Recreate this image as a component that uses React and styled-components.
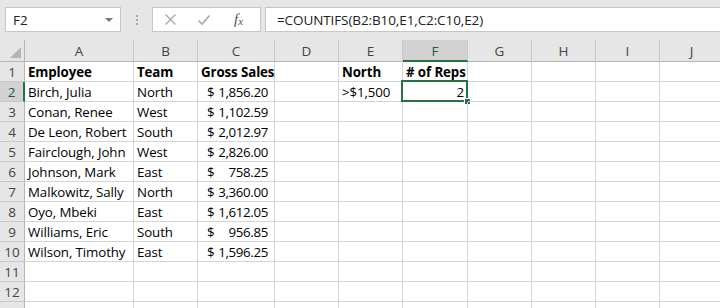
import React from "react";
import styled, { createGlobalStyle } from "styled-components";

const Global = createGlobalStyle`
  html, body { margin: 0; padding: 0; background: #ffffff; overflow: hidden; }
  body { font-family: "Open Sans", "Noto Sans", sans-serif; }
`;

const CELL_FONT = `"Open Sans", "Noto Sans", "Liberation Sans", sans-serif`;

const Page = styled.div`
  width: 720px;
  height: 308px;
  overflow: hidden;
  display: flex;
  flex-direction: column;
`;

const TopBar = styled.div`
  height: 40px;
  flex: none;
  background: #e6e6e6;
  display: flex;
  align-items: flex-start;
  padding: 7px 0 0 5px;
  box-sizing: border-box;
`;

const NameBox = styled.div`
  width: 116px;
  height: 25px;
  box-sizing: border-box;
  background: #fff;
  border: 1px solid #c6c6c6;
  display: flex;
  align-items: center;
  justify-content: space-between;
  padding: 0 7px 0 7px;
  font-family: ${CELL_FONT};
  font-size: 13.5px;
  color: #222;
`;

const Caret = styled.span`
  width: 0;
  height: 0;
  border-left: 4px solid transparent;
  border-right: 4px solid transparent;
  border-top: 4px solid #7a7a7a;
`;

const Grip = styled.div`
  width: 31px;
  height: 25px;
  display: flex;
  flex-direction: column;
  align-items: center;
  justify-content: center;
  gap: 2px;
  & > span {
    width: 2px;
    height: 2px;
    background: #a9a9a9;
  }
`;

const ButtonBox = styled.div`
  width: 109px;
  height: 25px;
  box-sizing: border-box;
  background: #fff;
  border: 1px solid #c6c6c6;
  display: flex;
  align-items: center;
  padding-left: 11px;
  gap: 20px;
`;

const Fx = styled.span`
  font-family: "Liberation Serif", "DejaVu Serif", serif;
  font-style: italic;
  font-size: 15px;
  color: #555;
  margin-left: 3px;
  & > sub {
    font-size: 11px;
    vertical-align: baseline;
    position: relative;
    top: 1px;
  }
`;

const FormulaBox = styled.div`
  flex: 1;
  height: 25px;
  margin-left: 4px;
  box-sizing: border-box;
  background: #fff;
  border: 1px solid #c6c6c6;
  border-right: none;
  display: flex;
  align-items: center;
  padding-left: 11px;
  font-family: ${CELL_FONT};
  font-size: 13.5px;
  letter-spacing: -0.1px;
  color: #222;
  white-space: nowrap;
`;

const COLS = [25, 109, 64, 77, 64, 64, 65, 64, 64, 64, 64, 100];

const Grid = styled.div`
  display: grid;
  grid-template-columns: ${COLS.map((c) => c + "px").join(" ")};
  grid-template-rows: 22px repeat(13, 20px);
  font-family: ${CELL_FONT};
  font-size: 13.3px;
  letter-spacing: -0.1px;
  color: #000;
`;

const ColHead = styled.div`
  box-sizing: border-box;
  background: ${(p) => (p.$active ? "#d2d2d2" : "#e6e6e6")};
  border-right: 1px solid #c8c8c8;
  border-bottom: ${(p) => (p.$active ? "2px solid #217346" : "1px solid #b6b6b6")};
  display: flex;
  align-items: center;
  justify-content: center;
  color: ${(p) => (p.$active ? "#1d5d38" : "#444")};
  font-size: 13.5px;
  letter-spacing: 0;
  padding-top: ${(p) => (p.$active ? "1px" : "0")};
`;

const Corner = styled.div`
  box-sizing: border-box;
  background: #e6e6e6;
  border-right: 1px solid #b6b6b6;
  border-bottom: 1px solid #b6b6b6;
  display: flex;
  align-items: flex-end;
  justify-content: flex-end;
  padding: 0 3px 3px 0;
`;

const RowHead = styled.div`
  box-sizing: border-box;
  background: ${(p) => (p.$active ? "#d2d2d2" : "#e6e6e6")};
  border-right: ${(p) => (p.$active ? "2px solid #217346" : "1px solid #b6b6b6")};
  border-bottom: 1px solid #c8c8c8;
  display: flex;
  align-items: center;
  justify-content: center;
  color: ${(p) => (p.$active ? "#1d5d38" : "#444")};
  font-size: 13.5px;
  letter-spacing: 0;
`;

const Cell = styled.div`
  position: relative;
  box-sizing: border-box;
  border-right: 1px solid #d4d4d4;
  border-bottom: 1px solid #d4d4d4;
  display: flex;
  align-items: center;
  justify-content: ${(p) => (p.$right ? "flex-end" : "flex-start")};
  padding: 0 ${(p) => (p.$right ? "3px" : "0")} 0 3px;
  font-weight: ${(p) => (p.$bold ? 700 : 400)};
  white-space: nowrap;
  overflow: visible;
`;

const Money = styled(Cell)`
  justify-content: space-between;
  padding: 0 6px 0 9px;
  letter-spacing: -0.35px;
`;

const Selection = styled.span`
  position: absolute;
  left: -2px;
  top: -2px;
  right: -1px;
  bottom: -1px;
  border: 2px solid #217346;
  pointer-events: none;
`;

const Handle = styled.span`
  position: absolute;
  right: -4px;
  bottom: -4px;
  width: 5px;
  height: 5px;
  background: #217346;
  border: 1px solid #fff;
`;

const letters = ["A", "B", "C", "D", "E", "F", "G", "H", "I", "J", ""];

const rows = [
  { a: "Employee", b: "Team", c: "Gross Sales", e: "North", f: "# of Reps", bold: true },
  { a: "Birch, Julia", b: "North", c: ["$", "1,856.20"], e: ">$1,500", f: "2" },
  { a: "Conan, Renee", b: "West", c: ["$", "1,102.59"] },
  { a: "De Leon, Robert", b: "South", c: ["$", "2,012.97"] },
  { a: "Fairclough, John", b: "West", c: ["$", "2,826.00"] },
  { a: "Johnson, Mark", b: "East", c: ["$", "758.25"] },
  { a: "Malkowitz, Sally", b: "North", c: ["$", "3,360.00"] },
  { a: "Oyo, Mbeki", b: "East", c: ["$", "1,612.05"] },
  { a: "Williams, Eric", b: "South", c: ["$", "956.85"] },
  { a: "Wilson, Timothy", b: "East", c: ["$", "1,596.25"] },
  {},
  {},
  {},
];

function XIcon() {
  return (
    <svg width="13" height="13" viewBox="0 0 13 13">
      <path d="M1.5 1.5 L11.5 11.5 M11.5 1.5 L1.5 11.5" stroke="#a8a8a8" strokeWidth="1.3" fill="none" />
    </svg>
  );
}

function CheckIcon() {
  return (
    <svg width="14" height="12" viewBox="0 0 14 12">
      <path d="M1.5 6.5 L5 10 L12.5 1.5" stroke="#a8a8a8" strokeWidth="1.6" fill="none" />
    </svg>
  );
}

function CornerTri() {
  return (
    <svg width="11" height="11" viewBox="0 0 11 11">
      <polygon points="11,0 11,11 0,11" fill="#b4b4b4" />
    </svg>
  );
}

export default function App() {
  return (
    <Page>
      <Global />
      <TopBar>
        <NameBox>
          <span>F2</span>
          <Caret />
        </NameBox>
        <Grip>
          <span />
          <span />
          <span />
        </Grip>
        <ButtonBox>
          <XIcon />
          <CheckIcon />
          <Fx>
            f<sub>x</sub>
          </Fx>
        </ButtonBox>
        <FormulaBox>=COUNTIFS(B2:B10,E1,C2:C10,E2)</FormulaBox>
      </TopBar>
      <Grid>
        <Corner>
          <CornerTri />
        </Corner>
        {letters.map((l, i) => (
          <ColHead key={i} $active={l === "F"}>
            {l}
          </ColHead>
        ))}
        {rows.map((r, i) => {
          const n = i + 1;
          return (
            <React.Fragment key={n}>
              <RowHead $active={n === 2}>{n}</RowHead>
              <Cell $bold={r.bold}>{r.a}</Cell>
              <Cell $bold={r.bold}>{r.b}</Cell>
              {Array.isArray(r.c) ? (
                <Money>
                  <span>{r.c[0]}</span>
                  <span>{r.c[1]}</span>
                </Money>
              ) : (
                <Cell $bold={r.bold}>{r.c}</Cell>
              )}
              <Cell />
              <Cell $bold={r.bold}>{r.e}</Cell>
              <Cell $bold={r.bold} $right={n === 2}>
                {r.f}
                {n === 2 && (
                  <>
                    <Selection />
                    <Handle />
                  </>
                )}
              </Cell>
              <Cell />
              <Cell />
              <Cell />
              <Cell />
              <Cell />
            </React.Fragment>
          );
        })}
      </Grid>
    </Page>
  );
}
